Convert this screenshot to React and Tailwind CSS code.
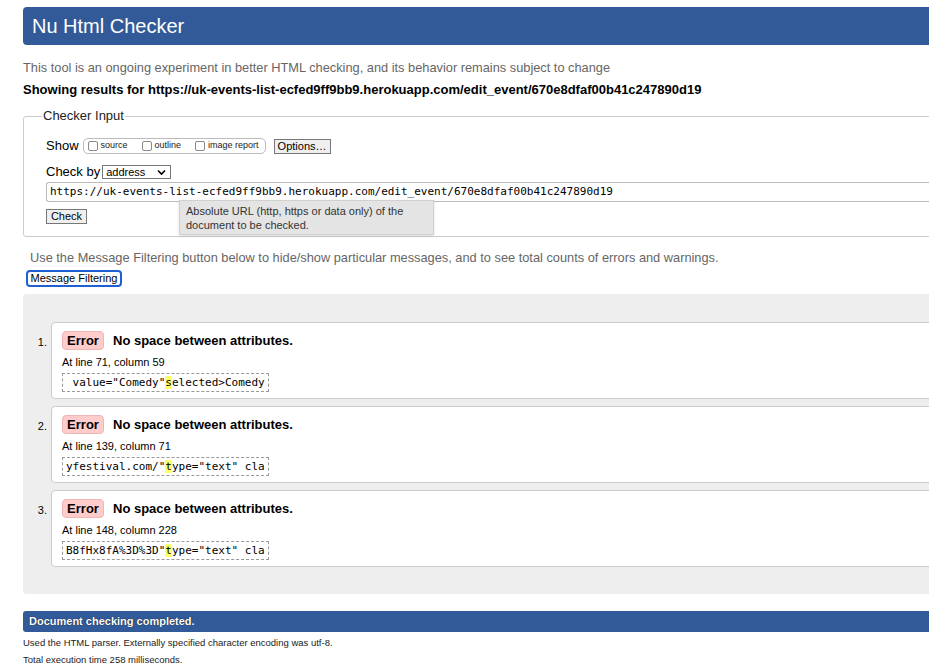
import React from "react";

const messages = [
  {
    line: "At line 71, column 59",
    before: " value=\"Comedy\"",
    mark: "s",
    after: "elected>Comedy",
  },
  {
    line: "At line 139, column 71",
    before: "yfestival.com/\"",
    mark: "t",
    after: "ype=\"text\" cla",
  },
  {
    line: "At line 148, column 228",
    before: "B8fHx8fA%3D%3D\"",
    mark: "t",
    after: "ype=\"text\" cla",
  },
];

const Box = ({ label, last }) => (
  <span className={last ? "flex items-center gap-[3px] mr-[6px]" : "flex items-center gap-[3px] mr-[14px]"}>
    <span className="w-[10px] h-[10px] border border-[#8a8a8a] rounded-[2px] bg-white" />
    <span className="text-[9px] text-[#222]">{label}</span>
  </span>
);

const App = () => {
  return (
    <div
      className="relative w-[929px] h-[666px] overflow-hidden bg-white text-black"
      style={{ fontFamily: "'Liberation Sans', Arial, sans-serif" }}
    >
      <div className="w-[1100px] pl-[23px]">
        {/* header */}
        <div className="mt-[7px] h-[38px] bg-[#335a98] rounded-l-[4px] flex items-center pl-[9px]">
          <h1 className="text-white text-[20px] leading-none">Nu Html Checker</h1>
        </div>

        <p className="mt-[15px] text-[12.8px] leading-[16px] text-[#666]">
          This tool is an ongoing experiment in better HTML checking, and its behavior remains subject to change
        </p>
        <p className="mt-[6px] text-[13px] leading-[16px] font-bold">
          Showing results for https://uk-events-list-ecfed9ff9bb9.herokuapp.com/edit_event/670e8dfaf00b41c247890d19
        </p>

        {/* checker input */}
        <fieldset className="mt-[10px] border border-[#ccc] rounded-l-[3px] h-[129px] pl-[22px]">
          <legend className="ml-[-4px] px-[1px] text-[13px] leading-[16px] text-[#222]">Checker Input</legend>
          <div className="flex items-center mt-[14px] h-[16px]">
            <span className="text-[13px] mr-[4px]">Show</span>
            <span className="flex items-center h-[16px] border border-[#bbb] rounded-[5px] pl-[4px]">
              <Box label="source" />
              <Box label="outline" />
              <Box label="image report" last />
            </span>
            <span className="ml-[8px] h-[15px] px-[3px] border border-[#777] bg-[#efefef] text-[11px] leading-[13px] flex items-center">
              Options…
            </span>
          </div>
          <div className="flex items-center mt-[10px] h-[16px]">
            <span className="text-[13px] mr-[2px]">Check by</span>
            <span className="w-[69px] h-[14px] border border-[#777] flex items-center justify-between pl-[3px] pr-[4px] text-[11px] leading-none">
              address
              <svg width="9" height="7" viewBox="0 0 9 7">
                <path d="M1 1.5 L4.5 5 L8 1.5" fill="none" stroke="#000" strokeWidth="1.6" />
              </svg>
            </span>
          </div>
          <div
            className="mt-[2px] h-[20px] border border-[#bbb] border-r-0 rounded-l-[3px] flex items-center pl-[3px] text-[11px]"
            style={{ fontFamily: "'DejaVu Sans Mono', monospace" }}
          >
            https://uk-events-list-ecfed9ff9bb9.herokuapp.com/edit_event/670e8dfaf00b41c247890d19
          </div>
          <div className="mt-[7px] w-[41px] h-[15px] border border-[#777] bg-[#efefef] text-[11px] flex items-center justify-center">
            Check
          </div>
        </fieldset>

        <p className="mt-[13px] ml-[7px] text-[12.8px] leading-[16px] text-[#666]">
          Use the Message Filtering button below to hide/show particular messages, and to see total counts of errors and warnings.
        </p>
        <div className="mt-[4px] ml-[3px] w-[96px] h-[17px] border-2 border-[#1f5fd6] rounded-[4px] text-[11px] flex items-center justify-center">
          Message Filtering
        </div>

        {/* results */}
        <div className="mt-[7px] h-[300px] bg-[#eeeeee] rounded-l-[4px] pt-[28px]">
          <ol className="flex flex-col gap-[7px]">
            {messages.map((m, i) => (
              <li key={i} className="flex items-start">
                <span className="w-[28px] pr-[4px] text-right text-[11px] pt-[12px]">{i + 1}.</span>
                <div className="flex-1 h-[77px] bg-white border border-[#ccc] rounded-l-[4px] pl-[10px] pt-[8px]">
                  <div className="flex items-center">
                    <span className="h-[19px] w-[42px] bg-[#fcc] border border-[#f0b5b5] rounded-[4px] text-[13px] font-bold flex items-center justify-center">
                      Error
                    </span>
                    <span className="ml-[9px] text-[13px] font-bold">No space between attributes.</span>
                  </div>
                  <div className="mt-[4px] text-[11px] leading-[14px]">{m.line}</div>
                  <div
                    className="mt-[4px] inline-block border border-dashed border-[#999] px-[3px] text-[11px] leading-[17px]"
                    style={{ fontFamily: "'DejaVu Sans Mono', monospace" }}
                  >
                    <span className="whitespace-pre">{m.before}</span>
                    <span className="bg-[#ff6]">{m.mark}</span>
                    <span className="whitespace-pre">{m.after}</span>
                  </div>
                </div>
              </li>
            ))}
          </ol>
        </div>

        {/* footer */}
        <div className="mt-[17px] h-[21px] bg-[#335a98] rounded-l-[3px] flex items-center pl-[6px]">
          <span className="text-white text-[11px] font-bold" style={{ textShadow: "0 0 1px #000" }}>
            Document checking completed.
          </span>
        </div>
        <p className="mt-[5px] text-[9.5px] leading-[12px] text-[#222]">
          Used the HTML parser. Externally specified character encoding was utf-8.
        </p>
        <p className="mt-[5px] text-[9.5px] leading-[12px] text-[#222]">Total execution time 258 milliseconds.</p>
      </div>

      {/* tooltip */}
      <div className="absolute left-[179px] top-[200px] w-[255px] h-[35px] bg-[#e4e4e4] border border-[#d0d0d0] shadow-sm px-[6px] pt-[3px] text-[11px] leading-[14px] text-[#333]">
        Absolute URL (http, https or data only) of the document to be checked.
      </div>
    </div>
  );
};

export default App;
